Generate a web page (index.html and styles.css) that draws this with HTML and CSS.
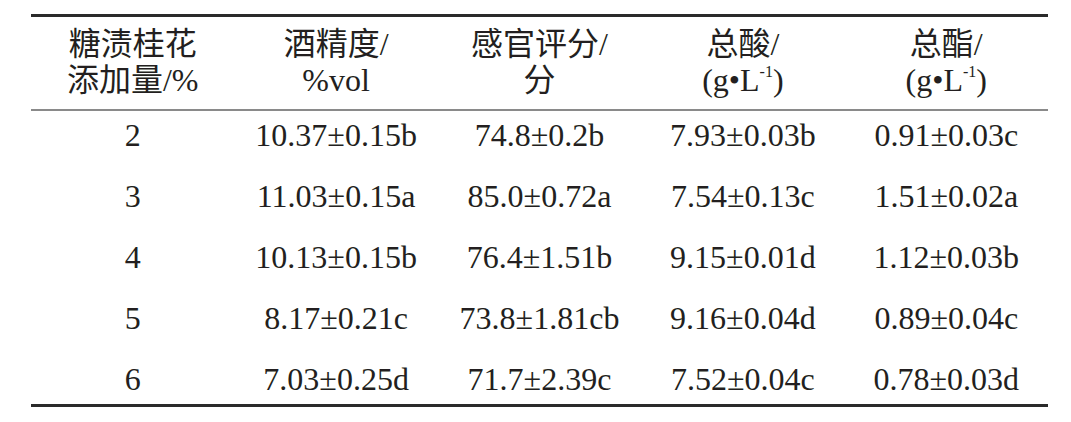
FILE: index.html
```html
<!DOCTYPE html>
<html lang="zh">
<head>
<meta charset="utf-8">
<link rel="stylesheet" href="styles.css">
</head>
<body>
<div class="table">
  <div class="head">
    <div class="cell">糖渍桂花<br>添加量/%</div>
    <div class="cell">酒精度/<br>%vol</div>
    <div class="cell">感官评分/<br>分</div>
    <div class="cell">总酸/<br>(g•L<sup>-1</sup>)</div>
    <div class="cell">总酯/<br>(g•L<sup>-1</sup>)</div>
  </div>
  <div class="body">
    <div class="cell">2</div><div class="cell">10.37±0.15b</div><div class="cell">74.8±0.2b</div><div class="cell">7.93±0.03b</div><div class="cell">0.91±0.03c</div>
    <div class="cell">3</div><div class="cell">11.03±0.15a</div><div class="cell">85.0±0.72a</div><div class="cell">7.54±0.13c</div><div class="cell">1.51±0.02a</div>
    <div class="cell">4</div><div class="cell">10.13±0.15b</div><div class="cell">76.4±1.51b</div><div class="cell">9.15±0.01d</div><div class="cell">1.12±0.03b</div>
    <div class="cell">5</div><div class="cell">8.17±0.21c</div><div class="cell">73.8±1.81cb</div><div class="cell">9.16±0.04d</div><div class="cell">0.89±0.04c</div>
    <div class="cell">6</div><div class="cell">7.03±0.25d</div><div class="cell">71.7±2.39c</div><div class="cell">7.52±0.04c</div><div class="cell">0.78±0.03d</div>
  </div>
</div>
</body>
</html>
```
FILE: styles.css
```css
html, body {
  margin: 0;
  padding: 0;
  background: #ffffff;
}
body {
  font-family: "Liberation Serif", "Noto Sans CJK SC", serif;
  font-size: 32px;
  color: #231f20;
}
.table {
  width: 1017px;
  margin: 14px 0 0 31px;
  border-top: 3px solid #2a2a2a;
  border-bottom: 3px solid #2a2a2a;
}
.head {
  display: grid;
  grid-template-columns: repeat(5, 1fr);
  padding: 9px 0 11px;
  border-bottom: 2px solid #8a8a8a;
  line-height: 36px;
}
.body {
  display: grid;
  grid-template-columns: repeat(5, 1fr);
  grid-auto-rows: 48px;
  row-gap: 13px;
  padding-bottom: 1px;
  line-height: 48px;
}
.cell {
  text-align: center;
  white-space: nowrap;
}
sup {
  font-size: 0.5em;
  line-height: 0;
  vertical-align: 0.85em;
}
```
